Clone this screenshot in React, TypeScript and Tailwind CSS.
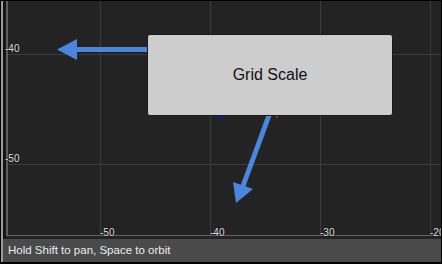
import type { FC } from "react";

const font = { fontFamily: '"Liberation Sans", Arial, sans-serif' };

// canvas starts at page (3,1); svg uses page coordinates through viewBox
const GridView: FC = () => {
  return (
    <div className="relative flex-1 overflow-hidden bg-[#232323]">
      <svg className="absolute inset-0" width="438" height="238" viewBox="3 1 438 238">
        <rect x="3" y="1" width="3" height="238" fill="#141414" />
        {[100, 210, 320, 430].map((x) => (
          <line key={x} x1={x + 0.5} y1="1" x2={x + 0.5} y2="235" stroke="#3b3b3b" strokeWidth="1" />
        ))}
        {[54, 164].map((y) => (
          <line key={y} x1="6" y1={y + 0.5} x2="441" y2={y + 0.5} stroke="#3b3b3b" strokeWidth="1" />
        ))}
        <line x1="7" y1="1" x2="7" y2="236" stroke="#5e5e5e" strokeWidth="2" />
        <line x1="6" y1="235.5" x2="441" y2="235.5" stroke="#636363" strokeWidth="1" />

        <circle cx="220" cy="111" r="7" fill="#16169a" />
        <rect x="276" y="116" width="2" height="2" fill="#b02424" />

        <rect x="75" y="47" width="75" height="5" fill="#4a86dc" />
        <polygon points="57,49.5 77,39 77,60" fill="#4a86dc" />
        <line x1="271" y1="110" x2="243" y2="186" stroke="#4a86dc" strokeWidth="5" />
        <polygon points="236,203 233,182 253,189" fill="#4a86dc" />
      </svg>

      {[
        { t: "-40", x: 2, y: 43 },
        { t: "-50", x: 2, y: 153 },
        { t: "-50", x: 97, y: 227 },
        { t: "-40", x: 207, y: 227 },
        { t: "-30", x: 317, y: 227 },
        { t: "-20", x: 427, y: 227 },
      ].map((l, i) => (
        <div
          key={i}
          className="absolute text-[10px] leading-[10px] text-[#e4e4e4] [text-shadow:0_0_1px_#000,0_0_1px_#000]"
          style={{ ...font, left: l.x, top: l.y }}
        >
          {l.t}
        </div>
      ))}

      <div
        className="absolute left-[144px] top-[33px] flex h-[82px] w-[246px] items-center justify-center rounded-[3px] border border-[#1a1a1a] bg-[#cdcdcd] text-[16px] text-[#111]"
        style={font}
      >
        Grid Scale
      </div>
    </div>
  );
};

const App: FC = () => {
  return (
    <div className="flex h-[264px] w-[442px] bg-black pt-px pr-px pb-[2px] pl-px">
      <div className="w-[2px] bg-[#9c9c9c]" />
      <div className="flex flex-1 flex-col">
        <GridView />
        <div
          className="flex h-[23px] items-center bg-[#4a4a4a] pl-[5px] text-[11.5px] text-[#ececec]"
          style={font}
        >
          Hold Shift to pan, Space to orbit
        </div>
      </div>
    </div>
  );
};

export default App;
